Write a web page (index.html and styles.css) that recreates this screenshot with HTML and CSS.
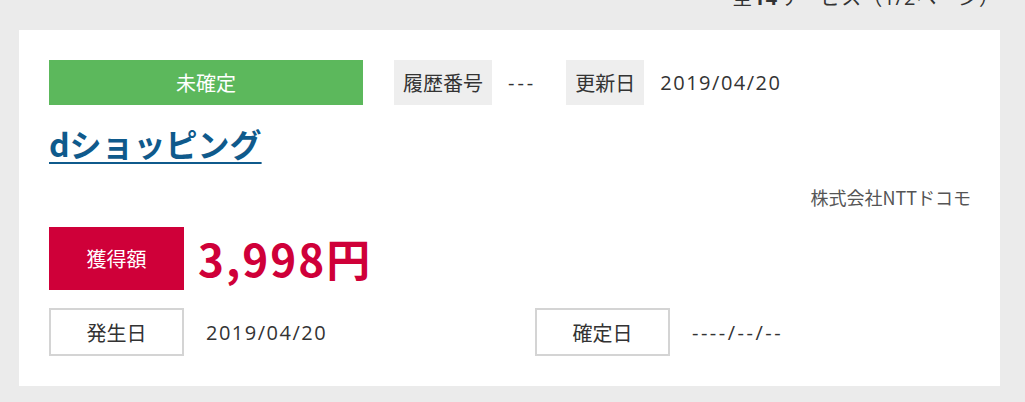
FILE: index.html
```html
<!DOCTYPE html>
<html lang="ja">
<head>
<meta charset="utf-8">
<link rel="stylesheet" href="styles.css">
</head>
<body>
<div class="page">
  <div class="count">全<b>14</b>サービス（1/2ページ）</div>
  <div class="card">
    <div class="row-top">
      <div class="status">未確定</div>
      <div class="label-gray">履歴番号</div>
      <div class="value value-dash">---</div>
      <div class="label-gray">更新日</div>
      <div class="value">2019/04/20</div>
    </div>
    <div class="title"><a href="#">dショッピング</a></div>
    <div class="company">株式会社NTTドコモ</div>
    <div class="row-amount">
      <div class="amount-label">獲得額</div>
      <div class="amount">3,998円</div>
    </div>
    <div class="row-dates">
      <div class="date-cell">
        <div class="label-box">発生日</div>
        <div class="date-value">2019/04/20</div>
      </div>
      <div class="date-cell">
        <div class="label-box">確定日</div>
        <div class="date-value date-empty">----/--/--</div>
      </div>
    </div>
  </div>
</div>
</body>
</html>
```

FILE: styles.css
```css
html, body {
  margin: 0;
  padding: 0;
  background: #ebebeb;
  font-family: "Noto Sans CJK JP", "Noto Sans", sans-serif;
  color: #333;
  overflow: hidden;
}
.page {
  width: 981px;
  margin-left: 19px;
}
.count {
  margin-top: -14px;
  height: 24px;
  line-height: 24px;
  font-size: 20px;
  text-align: right;
  color: #333;
  font-family: "Open Sans", "Noto Sans CJK JP", sans-serif;
  letter-spacing: 1px;
}
.count b { font-weight: bold; }
.card {
  margin-top: 20px;
  background: #fff;
  padding: 30px 29px 30px 30px;
}
.row-top {
  display: flex;
  height: 45px;
  align-items: stretch;
}
.status {
  width: 314px;
  background: #5cb85c;
  color: #fff;
  font-size: 20px;
  display: flex;
  align-items: center;
  justify-content: center;
  margin-right: 31px;
}
.label-gray {
  background: #eeeeee;
  font-size: 20px;
  padding: 0 9px;
  display: flex;
  align-items: center;
}
.value {
  font-size: 20px;
  font-family: "Open Sans", "Noto Sans CJK JP", sans-serif;
  letter-spacing: 1.5px;
  display: flex;
  align-items: center;
  padding: 0 30px 0 16px;
}
.value-dash {
  letter-spacing: 3px;
}
.title {
  margin-top: 16px;
  font-size: 32px;
  line-height: 44px;
  font-weight: bold;
}
.title a {
  color: #0f5a8c;
  text-decoration: underline;
  text-decoration-thickness: 2px;
  text-underline-offset: 5px;
}
.company {
  margin-top: 20px;
  text-align: right;
  font-size: 18px;
  line-height: 24px;
  color: #555;
}
.row-amount {
  margin-top: 18px;
  display: flex;
  align-items: center;
}
.amount-label {
  width: 135px;
  height: 63px;
  background: #cf0039;
  color: #fff;
  font-size: 20px;
  display: flex;
  align-items: center;
  justify-content: center;
}
.amount {
  margin-left: 14px;
  color: #cf0039;
  font-size: 44px;
  font-weight: bold;
  line-height: 63px;
  letter-spacing: 2px;
}
.row-dates {
  margin-top: 18px;
  display: grid;
  grid-template-columns: 486px 1fr;
}
.date-cell {
  display: flex;
  align-items: center;
}
.label-box {
  box-sizing: border-box;
  width: 135px;
  height: 48px;
  border: 2px solid #d4d4d4;
  font-size: 20px;
  display: flex;
  align-items: center;
  justify-content: center;
}
.date-value {
  margin-left: 22px;
  font-size: 20px;
  font-family: "Open Sans", "Noto Sans CJK JP", sans-serif;
  letter-spacing: 1.5px;
}
.date-empty {
  letter-spacing: 2.5px;
}
```
